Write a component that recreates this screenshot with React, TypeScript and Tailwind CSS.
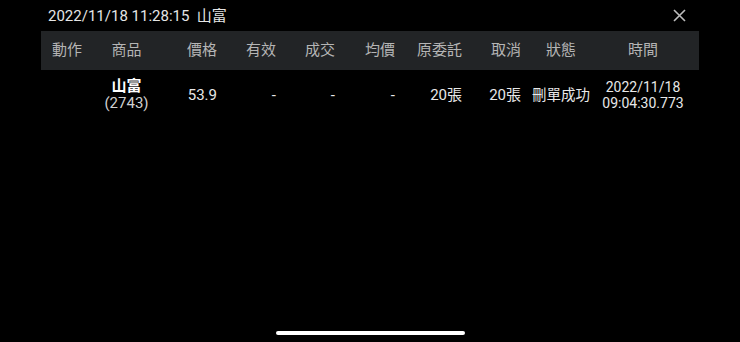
import React from "react";

const FONT = { fontFamily: 'Roboto, "Noto Sans CJK TC", sans-serif' };

// column widths taken from the screenshot; align per column
const COLS = [
  { head: "動作", w: "w-[52px]", align: "text-center" },
  { head: "商品", w: "w-[67px]", align: "text-center" },
  { head: "價格", w: "w-[57px]", align: "text-right" },
  { head: "有效", w: "w-[59px]", align: "text-right" },
  { head: "成交", w: "w-[59px]", align: "text-right" },
  { head: "均價", w: "w-[60px]", align: "text-right" },
  { head: "原委託", w: "w-[67px]", align: "text-right" },
  { head: "取消", w: "w-[59px]", align: "text-right" },
  { head: "狀態", w: "w-[80px]", align: "text-center" },
  { head: "時間", w: "w-[84px]", align: "text-center" },
];

const ROW: React.ReactNode[] = [
  "",
  <div className="leading-[17px]">
    <div className="font-bold text-white">山富</div>
    <div className="text-[#d0d0d0]">(2743)</div>
  </div>,
  "53.9",
  "-",
  "-",
  "-",
  "20張",
  "20張",
  <span className="text-[14.5px]">刪單成功</span>,
  <div className="leading-[16px] text-[14px]">
    <div>2022/11/18</div>
    <div>09:04:30.773</div>
  </div>,
];

export default function App() {
  return (
    <div className="w-[740px] h-[342px] bg-black flex flex-col text-[15px]" style={FONT}>
      <div className="h-[31px] flex items-center pl-[48px] pr-[54px] justify-between">
        <span className="text-[#e6e6e6] mt-[1px]">2022/11/18 11:28:15&nbsp; 山富</span>
        <svg width="13" height="13" viewBox="0 0 13 13" className="text-[#bdbdbd]">
          <path d="M1 1L12 12M12 1L1 12" stroke="currentColor" strokeWidth="1.6" fill="none" />
        </svg>
      </div>

      <div className="mx-[41px] h-[39px] bg-[#222426] flex items-center text-[#b5b5b5]">
        {COLS.map((c) => (
          <div key={c.head} className={`${c.w} ${c.align} shrink-0`}>
            {c.head}
          </div>
        ))}
      </div>

      <div className="mx-[41px] h-[50px] flex items-center text-[#e8e8e8]">
        {COLS.map((c, i) => (
          <div key={c.head} className={`${c.w} ${c.align} shrink-0 whitespace-nowrap`}>
            {ROW[i]}
          </div>
        ))}
      </div>

      <div className="flex-1" />
      <div className="flex justify-center pb-[7px]">
        <div className="w-[189px] h-[4px] rounded-full bg-white" />
      </div>
    </div>
  );
}
